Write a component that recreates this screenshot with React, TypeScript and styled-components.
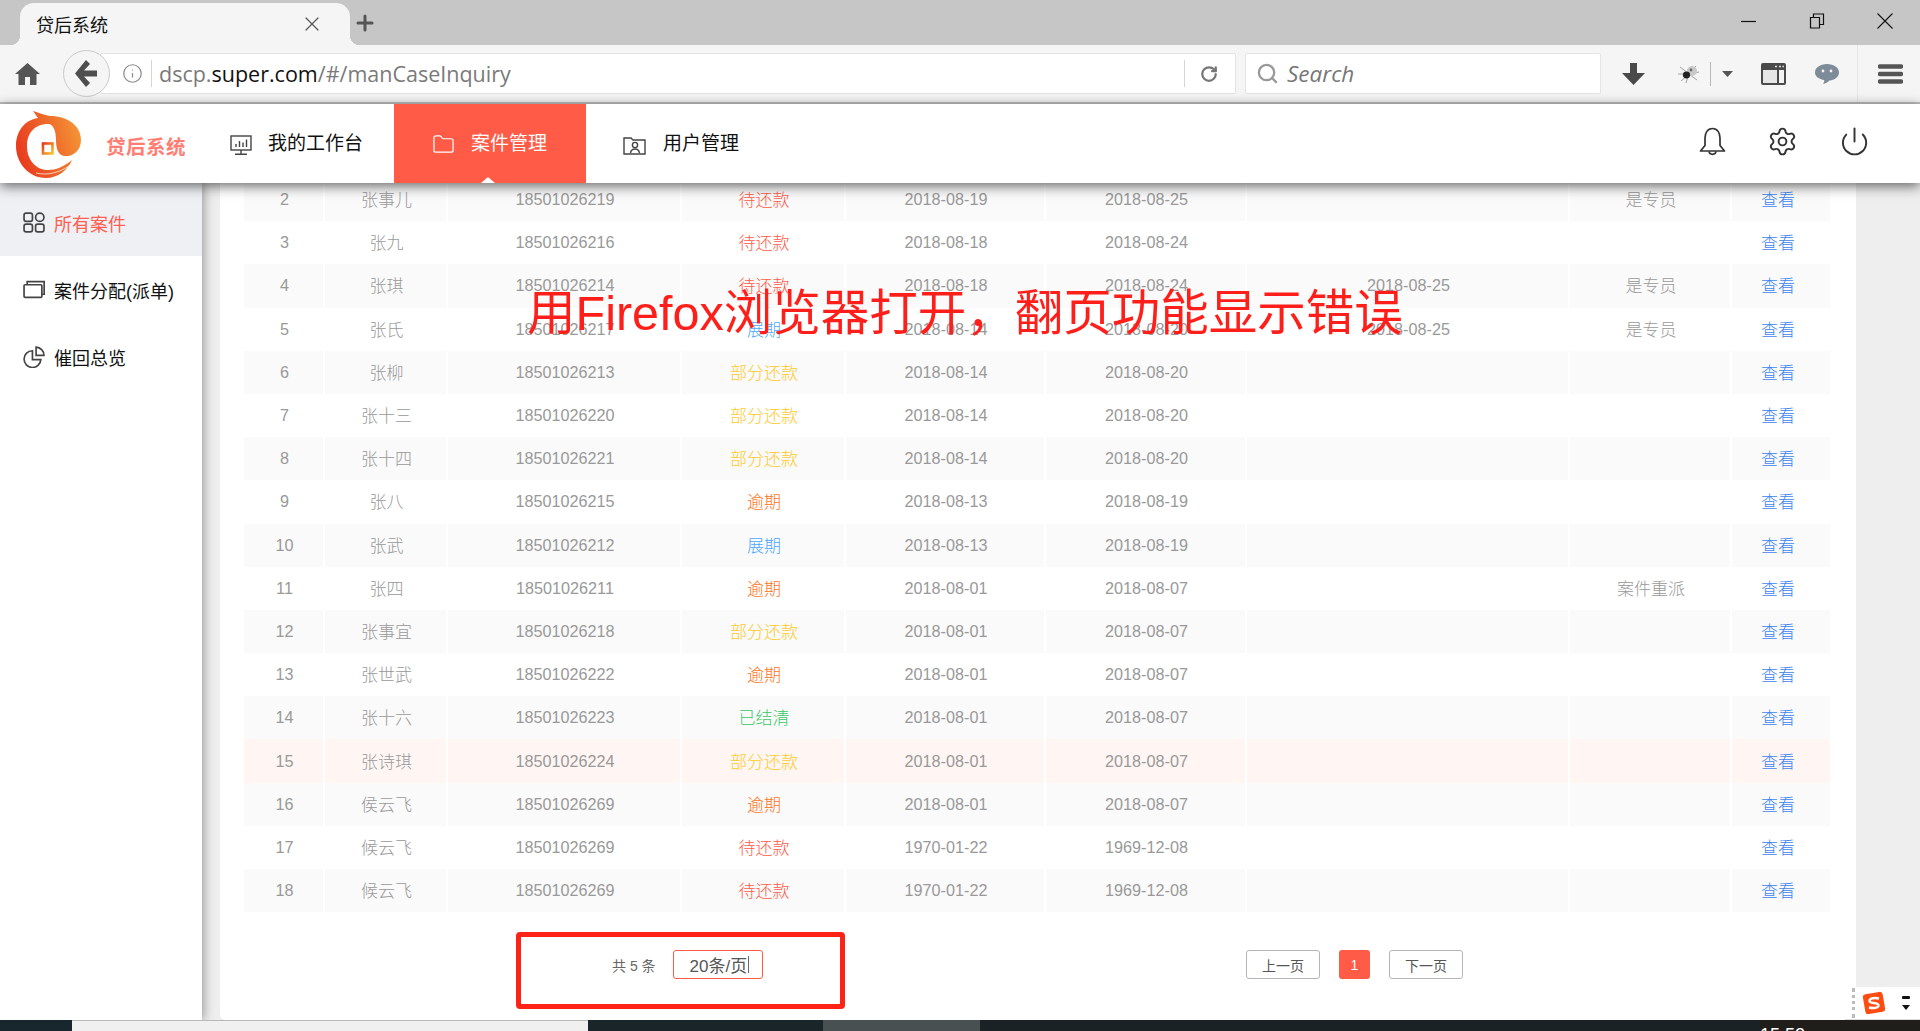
import React from "react";
import styled, { createGlobalStyle } from "styled-components";
import { Folder, Info, Plus, Power, RotateCw, Search, Settings, X } from "lucide-react";

type Status = "pending" | "extended" | "partial" | "overdue" | "settled";

type CaseRow = {
  no: number;
  name: string;
  phone: string;
  status: Status;
  start: string;
  end: string;
  extra?: string;
  note?: string;
  hover?: boolean;
};

const statusLabel: Record<Status, string> = {
  pending: "待还款",
  extended: "展期",
  partial: "部分还款",
  overdue: "逾期",
  settled: "已结清",
};

const statusColor: Record<Status, string> = {
  pending: "#ff5a48",
  extended: "#4aa8ff",
  partial: "#ffc926",
  overdue: "#ff7420",
  settled: "#38c768",
};

const rows: CaseRow[] = [
  { no: 2, name: "张事儿", phone: "18501026219", status: "pending", start: "2018-08-19", end: "2018-08-25", note: "是专员" },
  { no: 3, name: "张九", phone: "18501026216", status: "pending", start: "2018-08-18", end: "2018-08-24" },
  { no: 4, name: "张琪", phone: "18501026214", status: "pending", start: "2018-08-18", end: "2018-08-24", extra: "2018-08-25", note: "是专员" },
  { no: 5, name: "张氏", phone: "18501026217", status: "extended", start: "2018-08-14", end: "2018-08-20", extra: "2018-08-25", note: "是专员" },
  { no: 6, name: "张柳", phone: "18501026213", status: "partial", start: "2018-08-14", end: "2018-08-20" },
  { no: 7, name: "张十三", phone: "18501026220", status: "partial", start: "2018-08-14", end: "2018-08-20" },
  { no: 8, name: "张十四", phone: "18501026221", status: "partial", start: "2018-08-14", end: "2018-08-20" },
  { no: 9, name: "张八", phone: "18501026215", status: "overdue", start: "2018-08-13", end: "2018-08-19" },
  { no: 10, name: "张武", phone: "18501026212", status: "extended", start: "2018-08-13", end: "2018-08-19" },
  { no: 11, name: "张四", phone: "18501026211", status: "overdue", start: "2018-08-01", end: "2018-08-07", note: "案件重派" },
  { no: 12, name: "张事宜", phone: "18501026218", status: "partial", start: "2018-08-01", end: "2018-08-07" },
  { no: 13, name: "张世武", phone: "18501026222", status: "overdue", start: "2018-08-01", end: "2018-08-07" },
  { no: 14, name: "张十六", phone: "18501026223", status: "settled", start: "2018-08-01", end: "2018-08-07" },
  { no: 15, name: "张诗琪", phone: "18501026224", status: "partial", start: "2018-08-01", end: "2018-08-07", hover: true },
  { no: 16, name: "侯云飞", phone: "18501026269", status: "overdue", start: "2018-08-01", end: "2018-08-07" },
  { no: 17, name: "候云飞", phone: "18501026269", status: "pending", start: "1970-01-22", end: "1969-12-08" },
  { no: 18, name: "候云飞", phone: "18501026269", status: "pending", start: "1970-01-22", end: "1969-12-08" },
];

const Logo = () => (
  <svg width="65" height="68" viewBox="0 0 65 68">
    <defs>
      <linearGradient id="logoBody" x1="0" y1="0.6" x2="1" y2="0.3">
        <stop offset="0" stopColor="#e83a1e" />
        <stop offset="0.55" stopColor="#ee6a2a" />
        <stop offset="1" stopColor="#f59636" />
      </linearGradient>
      <linearGradient id="logoSquare" x1="0" y1="0" x2="1" y2="1">
        <stop offset="0" stopColor="#e8391f" />
        <stop offset="1" stopColor="#f7c32e" />
      </linearGradient>
    </defs>
    <path
      d="M17 1C24 3 28 5 34 6C52 6 65 16 65 30C65 42 55 47 48 46C42 45 40 38 40 30C40 20 37 14 32 14C18 14 11 24 11 36C11 50 20 60 32 60C40 60 47 57 56 50C52 60 42 68 30 68C12 68 0 52 0 36C0 22 8 10 22 8C20 6 19 3 17 1Z"
      fill="url(#logoBody)"
    />
    <path d="M20 63C32 66 44 62 53 56" fill="none" stroke="#fff" strokeWidth="1" opacity="0.7" />
    <rect x="27" y="33.5" width="9.500" height="10" fill="#fff" stroke="url(#logoSquare)" strokeWidth="2.6" />
  </svg>
);

const App = () => {
  return (
    <Page>
      <GlobalStyle />
      <TabStrip>
        <Tab>
          <TabTitle>贷后系统</TabTitle>
          <X size={24} strokeWidth={1.2} color="#555" />
        </Tab>
        <NewTab>
          <Plus size={24} strokeWidth={3} color="#555" />
        </NewTab>
        <WindowControls>
          <svg width="16" height="16" viewBox="0 0 16 16">
            <path d="M0 8.5H15" stroke="#111" strokeWidth="1.2" />
          </svg>
          <svg width="16" height="16" viewBox="0 0 16 16">
            <path d="M1.5 4.5H10.5V15H1.5Z M4.5 4.5V1H14.5V11.5H10.5" fill="none" stroke="#111" strokeWidth="1.2" />
          </svg>
          <svg width="16" height="16" viewBox="0 0 16 16">
            <path d="M0.5 0.5L15.5 15.5M15.5 0.5L0.5 15.5" stroke="#111" strokeWidth="1.1" />
          </svg>
        </WindowControls>
      </TabStrip>

      <Toolbar>
        <ToolIcon $ml={15}>
          <svg width="25" height="22" viewBox="0 0 25 22">
            <path d="M12.5 0L25 11H21.5V22H15V14H10V22H3.5V11H0Z" fill="#555" />
          </svg>
        </ToolIcon>
        <BackCircle>
          <svg width="22" height="27" viewBox="0 0 22 27">
            <path d="M0 13.5L11 0L15 4L9 10.5H22V16.5H9L15 23L11 27Z" fill="#4e4e4e" />
          </svg>
        </BackCircle>
        <UrlBar>
          <Info size={21} strokeWidth={1.4} color="#8a8a8a" />
          <UrlDivider />
          <UrlText>
            dscp.<UrlHost>super.com</UrlHost>/#/manCaseInquiry
          </UrlText>
          <UrlEnd>
            <RotateCw size={18} strokeWidth={3} color="#777" />
          </UrlEnd>
        </UrlBar>
        <SearchBar>
          <SearchIcon size={23} strokeWidth={2.4} color="#999" />
          <SearchText>Search</SearchText>
        </SearchBar>
        <ToolIcon $ml={21}>
          <svg width="23" height="22" viewBox="0 0 23 22">
            <path d="M8 0H15V10H23L11.5 22L0 10H8Z" fill="#4a4a4a" />
          </svg>
        </ToolIcon>
        <ToolIcon $ml={32}>
          <svg width="23" height="19" viewBox="0 0 23 19">
            <path d="M11 9L3 3M11 10L1 10M11 11L4 17M12 9L19 2M13 10L22 8M13 11L20 16M11 12L9 19" stroke="#8d8d8d" strokeWidth="0.8" />
            <ellipse cx="15" cy="7" rx="5" ry="5" fill="#c9c9c9" />
            <ellipse cx="9.5" cy="11" rx="3.6" ry="3.4" fill="#222" />
            <circle cx="14" cy="6" r="1.4" fill="#666" />
          </svg>
        </ToolIcon>
        <ToolDivider />
        <ToolIcon $ml={11}>
          <svg width="11" height="6" viewBox="0 0 11 6">
            <path d="M0 0H11L5.5 6Z" fill="#555" />
          </svg>
        </ToolIcon>
        <ToolIcon $ml={28}>
          <svg width="25" height="22" viewBox="0 0 25 22">
            <rect width="25" height="22" rx="2" fill="#4a4a4a" />
            <rect x="2" y="7" width="14" height="13" fill="#e6e6e6" />
            <rect x="18" y="7" width="5" height="13" fill="#f2f2f2" />
            <path d="M14 3.5H16M18 3.5H20M21.5 3.5H23" stroke="#ddd" strokeWidth="1.4" />
          </svg>
        </ToolIcon>
        <ToolIcon $ml={29}>
          <svg width="24" height="20" viewBox="0 0 24 20">
            <path d="M12 0C19 0 24 3.6 24 8.5C24 13 19.5 16 14.5 16.4C12.8 18 10.5 19.5 8 20C9 18.5 9.4 17 9.3 16C4 15.3 0 12.5 0 8.5C0 3.6 5 0 12 0Z" fill="#7e8c9a" />
            <circle cx="8" cy="7" r="1.4" fill="#f5f5f5" />
            <circle cx="16" cy="7" r="1.4" fill="#f5f5f5" />
          </svg>
        </ToolIcon>
        <MenuDivider />
        <ToolIcon $ml={20}>
          <svg width="25" height="20" viewBox="0 0 25 20">
            <path d="M2 2.5H23M2 10H23M2 17.5H23" stroke="#555" strokeWidth="4.4" strokeLinecap="round" />
          </svg>
        </ToolIcon>
      </Toolbar>

      <AppHeader>
        <Brand>
          <Logo />
          <BrandName>贷后系统</BrandName>
        </Brand>
        <NavItem $width={189} $pad={25}>
          <NavIcon>
            <svg width="22" height="20" viewBox="0 0 22 20" fill="none" stroke="#444" strokeWidth="1.4">
              <rect x="1" y="1" width="20" height="14" />
              <path d="M11 15V19M5 19.2H17" />
              <path d="M6 12V9M9.5 12V6M13 12V7.5M16.500 12V4.500" />
            </svg>
          </NavIcon>
          <NavLabel>我的工作台</NavLabel>
        </NavItem>
        <NavItem $active $width={192} $pad={38}>
          <NavIcon>
            <Folder size={23} strokeWidth={1.3} color="#fff" />
          </NavIcon>
          <NavLabel>案件管理</NavLabel>
        </NavItem>
        <NavItem $width={180} $pad={37}>
          <NavIcon>
            <svg width="24" height="20" viewBox="0 0 24 20" fill="none" stroke="#444" strokeWidth="1.4">
              <path d="M1 19V3H8L10 5H22V19Z" />
              <circle cx="12" cy="10" r="2.6" />
              <path d="M7.500 18C8 15 10 14 12 14C14 14 16 15 16.500 18" />
            </svg>
          </NavIcon>
          <NavLabel>用户管理</NavLabel>
        </NavItem>
        <HeaderActions>
          <svg width="27" height="29" viewBox="0 0 27 29" fill="none" stroke="#333" strokeWidth="1.7" strokeLinejoin="round">
            <path d="M13.500 1.500C8.500 1.500 6 6 6 11V18.500L1.500 24H25.500L21 18.500V11C21 6 18.500 1.500 13.500 1.500Z" />
            <path d="M10 24.500C10.500 28.200 16.500 28.200 17 24.500" />
          </svg>
          <Settings size={31} strokeWidth={1.5} color="#333" />
          <Power size={31} strokeWidth={1.5} color="#333" />
        </HeaderActions>
      </AppHeader>

      <Body>
        <Sidebar>
          <SideItem $active>
            <svg width="22" height="21" viewBox="0 0 21 20" fill="none" stroke="#444" strokeWidth="1.6">
              <rect x="1" y="1" width="8" height="8" rx="2" />
              <circle cx="16" cy="5" r="4" />
              <rect x="1" y="11.500" width="8" height="7.500" rx="2" />
              <rect x="12" y="11.500" width="8" height="7.500" rx="2" />
            </svg>
            <SideLabel $active>所有案件</SideLabel>
          </SideItem>
          <SideItem>
            <svg width="22" height="19" viewBox="0 0 21 18" fill="none" stroke="#444" strokeWidth="1.6">
              <rect x="1" y="4.500" width="17" height="12" rx="1" />
              <path d="M4 4V1.500H20.200V13.500H18" />
            </svg>
            <SideLabel>案件分配(派单)</SideLabel>
          </SideItem>
          <SideItem>
            <svg width="22" height="22" viewBox="0 0 21 21" fill="none" stroke="#444" strokeWidth="1.6">
              <path d="M9 4.500A8 8 0 1 0 17 13H9Z" />
              <path d="M12.500 1A8 8 0 0 1 20 9H12.500Z" />
            </svg>
            <SideLabel>催回总览</SideLabel>
          </SideItem>
        </Sidebar>

        <Main>
          <Card>
            <Table>
              {rows.map((row) => (
                <Row key={row.no} $striped={row.no % 2 === 0} $hover={row.hover}>
                  <Cell>{row.no}</Cell>
                  <Cell $cjk>{row.name}</Cell>
                  <Cell>{row.phone}</Cell>
                  <Cell $cjk $color={statusColor[row.status]}>
                    {statusLabel[row.status]}
                  </Cell>
                  <Cell>{row.start}</Cell>
                  <Cell>{row.end}</Cell>
                  <Cell>{row.extra}</Cell>
                  <Cell $cjk>{row.note}</Cell>
                  <Cell $cjk $color="#3f86ee">
                    查看
                  </Cell>
                </Row>
              ))}
            </Table>
            <Pagination>
              <PageSize>
                <Total>共 5 条</Total>
                <SizeSelect>
                  20条/页
                  <Caret />
                </SizeSelect>
              </PageSize>
              <Pager>
                <PagerButton>上一页</PagerButton>
                <PagerCurrent>1</PagerCurrent>
                <PagerButton>下一页</PagerButton>
              </Pager>
            </Pagination>
          </Card>
        </Main>
      </Body>

      <Taskbar>
        <TaskSlot $width={72} $bg="#17272d" />
        <TaskSlot $width={516} $bg="#f0f0f0" $line />
        <TaskSlot $width={235} $bg="#1a2529" />
        <TaskSlot $width={157} $bg="#495052" />
        <TaskSlot $width={780} $bg="#1a2225" />
        <Clock>15:52</Clock>
      </Taskbar>

      <ImeBar>
        <ImeGrip />
        <svg width="24" height="24" viewBox="0 0 24 24">
          <rect x="2" y="2" width="20" height="20" rx="3" fill="#ff4d12" transform="rotate(-10 12 12)" />
          <path d="M17 7.500C13 6.500 7.500 7 7.500 10C7.500 13 16.500 11 16.500 14.500C16.500 17 11 17.500 7 16.500" fill="none" stroke="#fff" strokeWidth="2.4" />
        </svg>
        <ImeMenu>
          <ImeDash />
          <ImeArrow />
        </ImeMenu>
      </ImeBar>

      <Annotation>用Firefox浏览器打开，翻页功能显示错误</Annotation>
      <Highlight />
    </Page>
  );
};

const GlobalStyle = createGlobalStyle`
  html, body {
    margin: 0;
    padding: 0;
    background: #fff;
  }
  * {
    box-sizing: border-box;
  }
  body {
    font-family: "Liberation Sans", "Noto Sans CJK SC", sans-serif;
  }
`;

const Page = styled.div`
  position: relative;
  width: 1920px;
  height: 1031px;
  overflow: hidden;
  display: flex;
  flex-direction: column;
`;

const TabStrip = styled.div`
  height: 45px;
  flex: none;
  display: flex;
  padding: 3px 0 0 20px;
  background: #c6c6c6;
`;

const Tab = styled.div`
  position: relative;
  width: 330px;
  display: flex;
  align-items: center;
  justify-content: space-between;
  padding: 0 26px 0 16px;
  background: #f5f5f5;
  border-radius: 14px 14px 0 0;

  &::before,
  &::after {
    content: "";
    position: absolute;
    bottom: 0;
    width: 10px;
    height: 10px;
  }
  &::before {
    left: -10px;
    background: radial-gradient(circle at 0 0, #c6c6c6 10px, #f5f5f5 10.5px);
  }
  &::after {
    right: -10px;
    background: radial-gradient(circle at 100% 0, #c6c6c6 10px, #f5f5f5 10.5px);
  }
`;

const TabTitle = styled.span`
  font-size: 18px;
  color: #111;
`;

const NewTab = styled.div`
  display: flex;
  align-items: center;
  margin: -2px 0 0 3px;
`;

const WindowControls = styled.div`
  margin-left: auto;
  display: flex;
  gap: 52px;
  padding: 10px 27px 0 0;
  align-items: flex-start;
  height: 30px;
`;

const Toolbar = styled.div`
  height: 59px;
  flex: none;
  display: flex;
  align-items: center;
  background: #f5f5f5;
  border-bottom: 2px solid #c0c0c0;
`;

const ToolIcon = styled.div<{ $ml: number }>`
  display: flex;
  flex: none;
  margin-left: ${(p) => p.$ml}px;
`;

const BackCircle = styled.div`
  position: relative;
  z-index: 1;
  flex: none;
  width: 47px;
  height: 47px;
  margin: 0 -10px 0 23px;
  display: flex;
  align-items: center;
  justify-content: center;
  padding-right: 2px;
  border-radius: 50%;
  background: #f5f5f5;
  border: 1px solid #c9c9c9;
`;

const UrlBar = styled.div`
  flex: none;
  width: 1136px;
  height: 41px;
  display: flex;
  align-items: center;
  padding-left: 21px;
  background: #fff;
  border: 1px solid #e4e4e4;
  border-radius: 2px;
`;

const UrlDivider = styled.div`
  width: 1px;
  height: 27px;
  margin-left: 8px;
  background: #d5d5d5;
`;

const UrlText = styled.div`
  margin-left: 7px;
  font-family: "Open Sans", "Noto Sans", sans-serif;
  font-size: 21.5px;
  color: #7a7a7a;
  white-space: nowrap;
`;

const UrlHost = styled.span`
  color: #111;
`;

const UrlEnd = styled.div`
  margin-left: auto;
  width: 51px;
  height: 27px;
  display: flex;
  align-items: center;
  padding-left: 15px;
  border-left: 1px solid #d5d5d5;
`;

const SearchBar = styled.div`
  flex: none;
  width: 356px;
  height: 41px;
  margin-left: 9px;
  display: flex;
  align-items: center;
  padding-left: 10px;
  background: #fff;
  border: 1px solid #e4e4e4;
  border-radius: 2px;
`;

const SearchIcon = styled(Search)`
  flex: none;
`;

const SearchText = styled.span`
  margin-left: 8px;
  font-family: "Open Sans", "Noto Sans", sans-serif;
  font-style: italic;
  font-size: 22.5px;
  color: #777;
`;

const ToolDivider = styled.div`
  flex: none;
  width: 1px;
  height: 24px;
  margin-left: 10px;
  background: #b8b8b8;
`;

const MenuDivider = styled.div`
  flex: none;
  width: 1px;
  align-self: stretch;
  margin-left: 18px;
  background: #e6e6e6;
`;

const AppHeader = styled.header`
  position: relative;
  z-index: 3;
  height: 79px;
  flex: none;
  display: flex;
  background: #fff;
  box-shadow: 0 3px 12px rgba(0, 0, 0, 0.6);
`;

const Brand = styled.div`
  width: 205px;
  flex: none;
  display: flex;
  align-items: center;
  padding-left: 16px;
  gap: 25px;
`;

const BrandName = styled.span`
  margin-top: 4px;
  font-size: 19.5px;
  font-weight: 700;
  letter-spacing: 0.5px;
  white-space: nowrap;
  color: #ff7d72;
`;

const NavItem = styled.div<{ $active?: boolean; $width: number; $pad: number }>`
  position: relative;
  width: ${(p) => p.$width}px;
  flex: none;
  display: flex;
  align-items: center;
  gap: 16px;
  padding: 0 0 5px ${(p) => p.$pad}px;
  background: ${(p) => (p.$active ? "#ff5b47" : "transparent")};
  color: ${(p) => (p.$active ? "#fff" : "#111")};

  ${(p) =>
    p.$active &&
    `
    &::after {
      content: "";
      position: absolute;
      left: 87px;
      bottom: 0;
      border-left: 7px solid transparent;
      border-right: 7px solid transparent;
      border-bottom: 6px solid #fff;
    }
  `}
`;

const NavIcon = styled.span`
  display: flex;
  margin-top: 7px;
`;

const NavLabel = styled.span`
  font-size: 19px;
`;

const HeaderActions = styled.div`
  margin-left: auto;
  display: flex;
  align-items: center;
  gap: 41px;
  padding: 0 50px 4px 0;
`;

const Body = styled.div`
  flex: 1;
  min-height: 0;
  display: flex;
`;

const Sidebar = styled.nav`
  position: relative;
  z-index: 2;
  width: 202px;
  flex: none;
  background: #fff;
  box-shadow: 2px 0 10px rgba(0, 0, 0, 0.35);
`;

const SideItem = styled.div<{ $active?: boolean }>`
  height: ${(p) => (p.$active ? 73 : 67.5)}px;
  display: flex;
  align-items: center;
  gap: 9px;
  padding: ${(p) => (p.$active ? 6 : 0)}px 0 0 23px;
  background: ${(p) => (p.$active ? "#eef0f4" : "#fff")};
`;

const SideLabel = styled.span<{ $active?: boolean }>`
  font-size: 18px;
  color: ${(p) => (p.$active ? "#ff5f52" : "#111")};
  white-space: nowrap;
`;

const Main = styled.main`
  flex: 1;
  min-width: 0;
  display: flex;
  padding: 0 64px 0 18px;
  background: #eeeeee;
`;

const Card = styled.section`
  flex: 1;
  min-width: 0;
  padding: 0 26px 0 24px;
  background: #fff;
  border-bottom-left-radius: 6px;
  overflow: hidden;
`;

const Table = styled.div`
  margin-top: -5px;
`;

const Row = styled.div<{ $striped: boolean; $hover?: boolean }>`
  display: grid;
  grid-template-columns: 79px 121px 232px 162px 198px 199px 321px 160px 98px;
  column-gap: 2px;
  height: 43.2px;

  & > div {
    background: ${(p) => (p.$hover ? "#fff6f4" : p.$striped ? "#fafafa" : "#fff")};
  }
  & > div:last-child {
    padding-right: 8px;
  }
`;

const Cell = styled.div<{ $cjk?: boolean; $color?: string }>`
  display: flex;
  align-items: center;
  justify-content: center;
  padding-left: 2px;
  padding-bottom: ${(p) => (p.$cjk ? 2 : 0)}px;
  font-size: ${(p) => (p.$cjk ? 17 : 16.2)}px;
  font-weight: ${(p) => (p.$cjk ? 300 : 400)};
  color: ${(p) => p.$color ?? "#999"};
  white-space: nowrap;
`;

const Pagination = styled.div`
  display: flex;
  justify-content: space-between;
  padding: 38px 367px 0 368px;
`;

const PageSize = styled.div`
  display: flex;
  align-items: center;
  gap: 17px;
`;

const Total = styled.span`
  font-size: 14px;
  color: #666;
`;

const SizeSelect = styled.div`
  position: relative;
  width: 90px;
  height: 29px;
  display: flex;
  align-items: center;
  padding-left: 16px;
  font-size: 17px;
  color: #555;
  border: 1px solid #ff5b47;
  border-radius: 3px;
`;

const Caret = styled.span`
  width: 1px;
  height: 17px;
  margin-left: 1px;
  background: #667;
`;

const Pager = styled.div`
  display: flex;
  gap: 19px;
`;

const PagerButton = styled.div`
  width: 74px;
  height: 29px;
  display: flex;
  align-items: center;
  justify-content: center;
  font-size: 14px;
  color: #555;
  border: 1px solid #b5b5b5;
  border-radius: 3px;
`;

const PagerCurrent = styled.div`
  width: 31px;
  height: 29px;
  display: flex;
  align-items: center;
  justify-content: center;
  font-size: 14px;
  color: #fff;
  background: #ff5b47;
  border-radius: 3px;
`;

const Taskbar = styled.footer`
  position: relative;
  z-index: 4;
  height: 11px;
  flex: none;
  display: flex;
  background: #1f1e1b;
  overflow: hidden;
`;

const TaskSlot = styled.div<{ $width: number; $bg: string; $line?: boolean }>`
  width: ${(p) => p.$width}px;
  flex: none;
  background: ${(p) => p.$bg};
  border-top: ${(p) => (p.$line ? "1px solid #b8b8b8" : "none")};
`;

const Clock = styled.span`
  padding-top: 5px;
  font-size: 18px;
  line-height: 20px;
  color: #fff;
`;

const ImeBar = styled.div`
  position: absolute;
  right: 0;
  bottom: 11px;
  z-index: 5;
  width: 75px;
  height: 33px;
  display: flex;
  align-items: center;
  gap: 7px;
  padding-left: 7px;
  background: #fff;
  border-bottom: 1px solid #ddd;
`;

const ImeGrip = styled.div`
  width: 3px;
  height: 30px;
  border-left: 3px dotted #bbb;
`;

const ImeMenu = styled.div`
  margin-left: 9px;
  display: flex;
  flex-direction: column;
  align-items: center;
  gap: 6px;
`;

const ImeDash = styled.div`
  width: 8px;
  height: 3px;
  background: #111;
  border-radius: 1px;
`;

const ImeArrow = styled.div`
  border-left: 4px solid transparent;
  border-right: 4px solid transparent;
  border-top: 5px solid #111;
`;

const Annotation = styled.div`
  position: absolute;
  z-index: 2;
  left: 527px;
  top: 278px;
  font-size: 48.5px;
  line-height: 70px;
  color: #ff1f1a;
  white-space: nowrap;
`;

const Highlight = styled.div`
  position: absolute;
  z-index: 2;
  left: 516px;
  top: 932px;
  width: 329px;
  height: 77px;
  border: 5px solid #ff2216;
  border-radius: 4px;
`;

export default App;
